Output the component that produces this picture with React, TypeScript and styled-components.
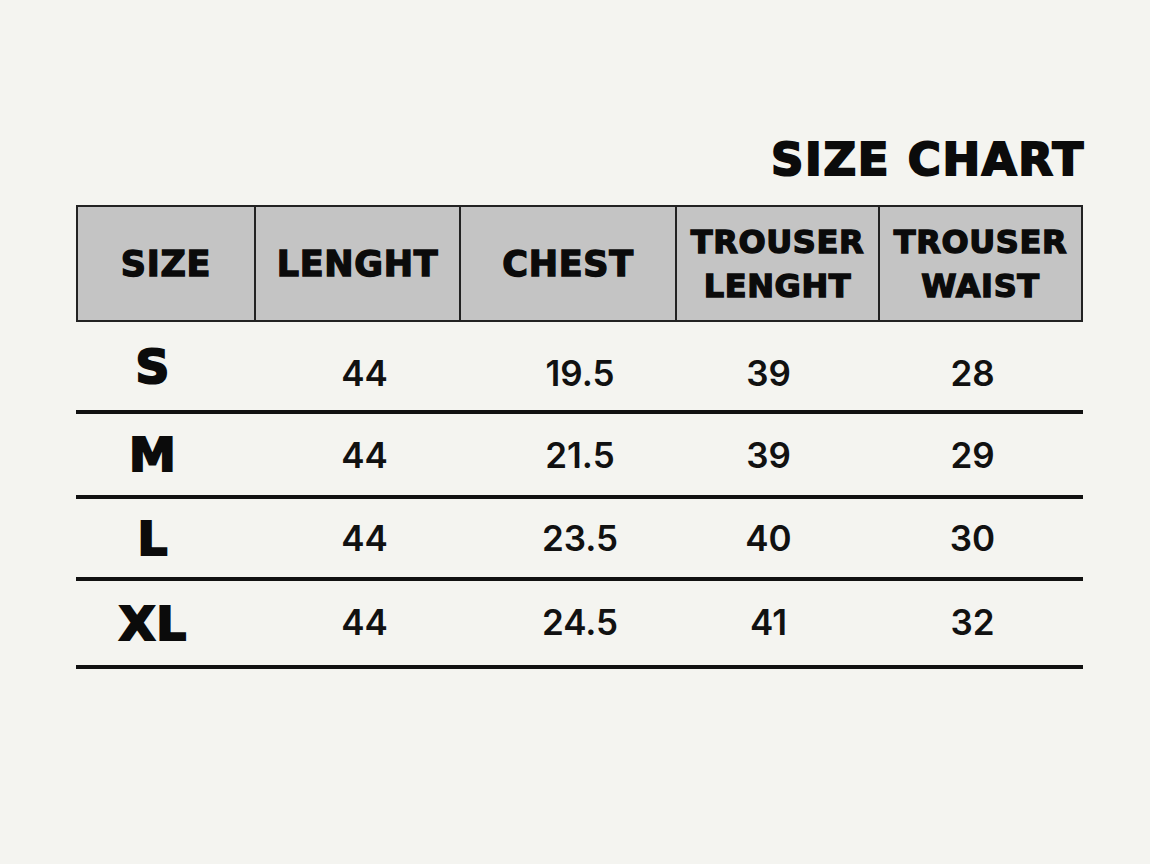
import styled, { createGlobalStyle } from "styled-components";

type Column = { label: string[]; width: number; shift: number };

const columns: Column[] = [
  { label: ["SIZE"], width: 178, shift: -12 },
  { label: ["LENGHT"], width: 205, shift: 8 },
  { label: ["CHEST"], width: 216, shift: 13 },
  { label: ["TROUSER", "LENGHT"], width: 203, shift: -8 },
  { label: ["TROUSER", "WAIST"], width: 205, shift: -8 },
];

type SizeRow = { size: string; values: string[]; height: number; drop: number };

const rows: SizeRow[] = [
  { size: "S", values: ["44", "19.5", "39", "28"], height: 88, drop: 14 },
  { size: "M", values: ["44", "21.5", "39", "29"], height: 81, drop: 2 },
  { size: "L", values: ["44", "23.5", "40", "30"], height: 78, drop: 0 },
  { size: "XL", values: ["44", "24.5", "41", "32"], height: 84, drop: -2 },
];

const GlobalStyle = createGlobalStyle`
  html, body {
    margin: 0;
    padding: 0;
    background: #f4f4f0;
  }
`;

const App = () => {
  return (
    <>
      <GlobalStyle />
      <Page>
        <Chart>
          <Title>SIZE CHART</Title>

          {/* 헤더 */}
          <HeaderRow>
            {columns.map((col, i) => (
              <HeaderCell key={i} width={col.width} first={i === 0} last={i === columns.length - 1}>
                {col.label.length > 1 ? (
                  col.label.map((line) => <SmallLine key={line}>{line}</SmallLine>)
                ) : (
                  <HeaderLabel>{col.label[0]}</HeaderLabel>
                )}
              </HeaderCell>
            ))}
          </HeaderRow>

          {/* 사이즈별 행 */}
          {rows.map((row) => (
            <BodyRow key={row.size} height={row.height}>
              <BodyCell width={columns[0].width} shift={columns[0].shift}>
                <SizeLabel>{row.size}</SizeLabel>
              </BodyCell>
              {row.values.map((v, i) => (
                <BodyCell key={i} width={columns[i + 1].width} shift={columns[i + 1].shift}>
                  <Value drop={row.drop}>{v}</Value>
                </BodyCell>
              ))}
            </BodyRow>
          ))}
        </Chart>
      </Page>
    </>
  );
};

const Page = styled.div`
  padding: 137px 0 0 76px;
  min-height: 864px;
  box-sizing: border-box;
`;

const Chart = styled.div`
  width: 1007px;
  display: flex;
  flex-direction: column;
`;

const Title = styled.h1`
  margin: 0 0 23px;
  align-self: flex-end;
  font-family: "DejaVu Sans", sans-serif;
  font-weight: 700;
  font-size: 45px;
  line-height: 45px;
  letter-spacing: 1.7px;
  margin-right: -2px;
  color: #0b0b0b;
  -webkit-text-stroke: 2px #0b0b0b;
`;

const HeaderRow = styled.div`
  display: flex;
  height: 117px;
  background: #c4c4c4;
  border: 2px solid #222;
  box-sizing: border-box;
`;

const HeaderCell = styled.div<{ width: number; first: boolean; last: boolean }>`
  width: ${(p) => p.width - (p.first || p.last ? 2 : 0)}px;
  box-sizing: border-box;
  border-left: ${(p) => (p.first ? "none" : "2px solid #222")};
  display: flex;
  flex-direction: column;
  align-items: center;
  justify-content: center;
  font-family: "DejaVu Sans", sans-serif;
  font-weight: 700;
  color: #0b0b0b;
  -webkit-text-stroke: 1.4px #0b0b0b;
`;

const HeaderLabel = styled.span`
  font-size: 35px;
  line-height: 40px;
  letter-spacing: 0.7px;
`;

const SmallLine = styled.span`
  font-size: 32px;
  line-height: 44px;
  letter-spacing: 0.6px;
`;

const BodyRow = styled.div<{ height: number }>`
  display: flex;
  height: ${(p) => p.height}px;
  border-bottom: 4px solid #111;
`;

const BodyCell = styled.div<{ width: number; shift: number }>`
  width: ${(p) => p.width}px;
  box-sizing: border-box;
  padding-left: ${(p) => Math.max(0, p.shift * 2)}px;
  padding-right: ${(p) => Math.max(0, -p.shift * 2)}px;
  display: flex;
  align-items: center;
  justify-content: center;
`;

const SizeLabel = styled.span`
  font-family: "DejaVu Sans", sans-serif;
  font-weight: 700;
  font-size: 47px;
  line-height: 1;
  letter-spacing: 1px;
  color: #0b0b0b;
  -webkit-text-stroke: 2.2px #0b0b0b;
`;

const Value = styled.span<{ drop: number }>`
  font-family: Inter, "Liberation Sans", sans-serif;
  font-weight: 600;
  font-size: 35px;
  line-height: 1;
  color: #111;
  padding-top: ${(p) => Math.max(0, p.drop)}px;
  padding-bottom: ${(p) => Math.max(0, -p.drop)}px;
`;

export default App;
